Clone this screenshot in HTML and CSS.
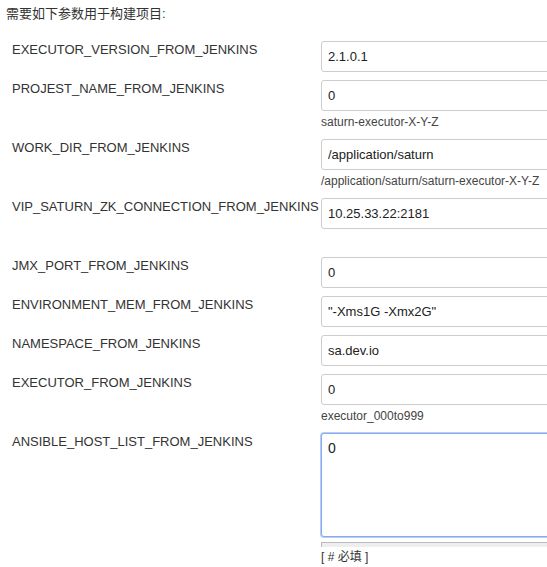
FILE: index.html
```html
<!DOCTYPE html>
<html lang="zh">
<head>
<meta charset="utf-8">
<link rel="stylesheet" href="styles.css">
</head>
<body>
<div class="page">
  <div class="title">需要如下参数用于构建项目:</div>
  <div class="params">
    <div class="label">EXECUTOR_VERSION_FROM_JENKINS</div>
    <div class="field"><input class="input" type="text" value="2.1.0.1"></div>

    <div class="label">PROJEST_NAME_FROM_JENKINS</div>
    <div class="field"><input class="input" type="text" value="0"><div class="hint">saturn-executor-X-Y-Z</div></div>

    <div class="label">WORK_DIR_FROM_JENKINS</div>
    <div class="field"><input class="input" type="text" value="/application/saturn"><div class="hint">/application/saturn/saturn-executor-X-Y-Z</div></div>

    <div class="label">VIP_SATURN_ZK_CONNECTION_FROM_JENKINS</div>
    <div class="field"><input class="input" type="text" value="10.25.33.22:2181"><div class="hint"></div></div>

    <div class="label">JMX_PORT_FROM_JENKINS</div>
    <div class="field"><input class="input" type="text" value="0"></div>

    <div class="label">ENVIRONMENT_MEM_FROM_JENKINS</div>
    <div class="field"><input class="input" type="text" value="&quot;-Xms1G -Xmx2G&quot;"></div>

    <div class="label">NAMESPACE_FROM_JENKINS</div>
    <div class="field"><input class="input" type="text" value="sa.dev.io"></div>

    <div class="label">EXECUTOR_FROM_JENKINS</div>
    <div class="field"><input class="input" type="text" value="0"><div class="hint">executor_000to999</div></div>

    <div class="label">ANSIBLE_HOST_LIST_FROM_JENKINS</div>
    <div class="field"><textarea class="area">0</textarea><div class="handle"></div><div class="required">[ # 必填 ]</div></div>
  </div>
</div>
</body>
</html>
```

FILE: styles.css
```css
html, body {
  margin: 0;
  padding: 0;
  overflow: hidden;
  background: #fff;
}
body {
  font-family: "Liberation Sans", Arial, "Noto Sans CJK SC", sans-serif;
  font-size: 13px;
  color: #333;
}
.page {
  box-sizing: border-box;
  padding: 6px 0 0 6px;
  width: 547px;
  height: 567px;
  overflow: hidden;
}
.title {
  line-height: 16px;
  height: 16px;
  margin-bottom: 19px;
  font-family: "Liberation Sans", "Noto Sans CJK SC", sans-serif;
  color: #333;
}
.params {
  display: grid;
  grid-template-columns: 309px 260px;
  row-gap: 8px;
  padding-left: 6px;
}
.label {
  white-space: nowrap;
  padding-top: 1px;
  line-height: 15px;
  color: #333;
}
.field {
  display: flex;
  flex-direction: column;
}
.input {
  box-sizing: border-box;
  height: 31px;
  width: 260px;
  margin: 0;
  padding: 0 6px;
  border: 1px solid #ccc;
  border-radius: 3px;
  font-family: "Liberation Sans", Arial, sans-serif;
  font-size: 13px;
  color: #222;
  background: #fff;
  outline: none;
}
.hint {
  height: 20px;
  box-sizing: border-box;
  padding-top: 4px;
  line-height: 15px;
  font-size: 12px;
  color: #444;
}
.area {
  box-sizing: border-box;
  display: block;
  width: 260px;
  height: 104px;
  margin: 0;
  padding: 6px 6px;
  border: 1px solid #88aaee;
  border-radius: 3px;
  box-shadow: 0 0 0 1px #b8cdf5;
  font-family: "Liberation Sans", Arial, sans-serif;
  font-size: 14px;
  line-height: 17px;
  color: #222;
  resize: none;
  outline: none;
}
.handle {
  margin-top: 5px;
  height: 5px;
  background: #eee;
  border-top: 1px solid #bbb;
  border-left: 1px solid #bbb;
  box-sizing: border-box;
}
.required {
  margin-top: 3px;
  line-height: 15px;
  font-size: 12px;
  color: #333;
  font-family: "Liberation Sans", "Noto Sans CJK SC", sans-serif;
}
```
